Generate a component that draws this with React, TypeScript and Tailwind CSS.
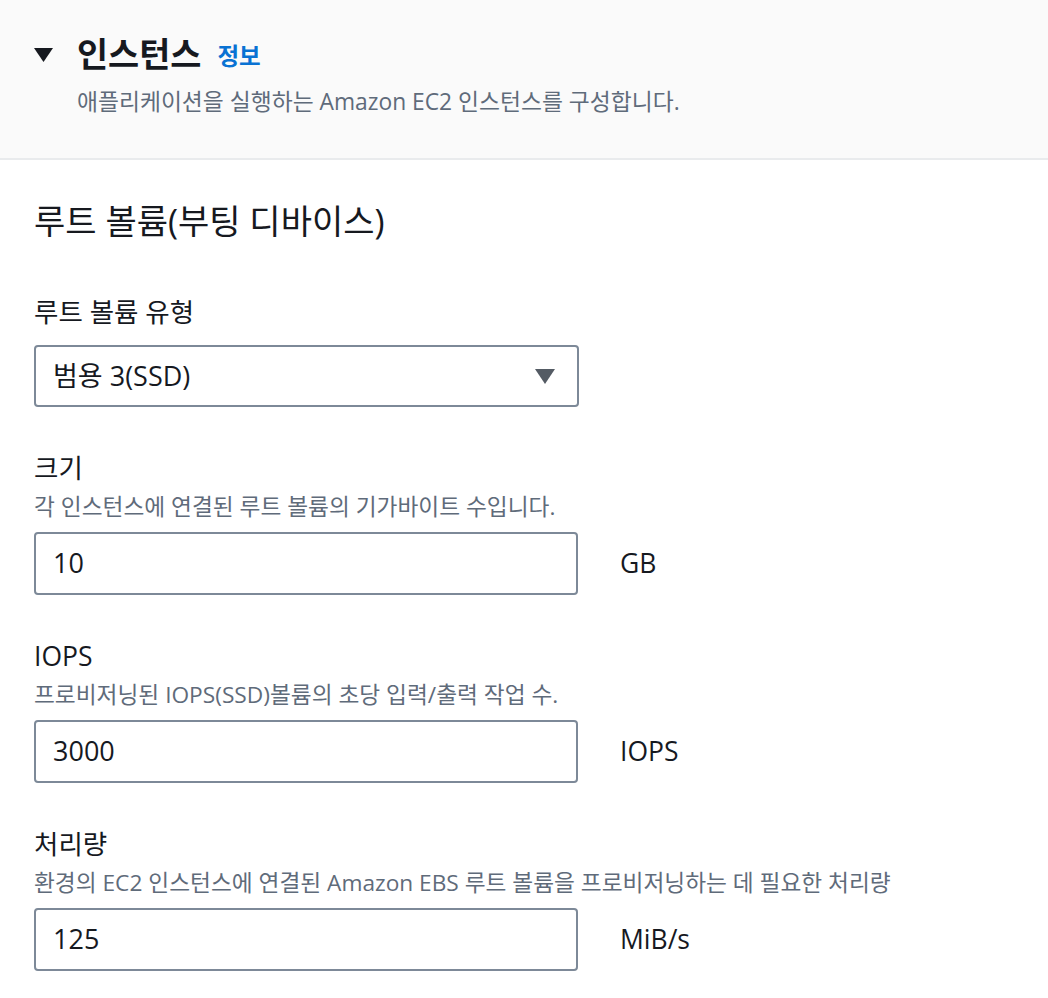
import React from "react";

const font = { fontFamily: '"Open Sans", "Noto Sans CJK KR", sans-serif' };

function Field({ label, desc, value, unit }: { label: string; desc: string; value: string; unit: string }) {
  return (
    <div className="flex flex-col mt-[45px]">
      <div className="text-[26.5px] leading-[32px] text-[#16191f]">{label}</div>
      <div className="mt-[9px] text-[22.7px] leading-[28px] text-[#5f6b7a]">{desc}</div>
      <div className="mt-[11px] flex items-center">
        <div className="w-[544px] h-[63px] box-border border-2 border-[#7d8998] rounded-[4px] flex items-center pl-[17px] text-[27px] text-[#16191f] bg-white">
          {value}
        </div>
        <div className="ml-[42px] text-[26.5px] text-[#16191f]">{unit}</div>
      </div>
    </div>
  );
}

export default function App() {
  return (
    <div className="w-[1048px] h-[998px] bg-white overflow-hidden" style={font}>
      <div className="h-[160px] box-border bg-[#fafafa] border-b-2 border-[#e9ebed] pt-[34px] pl-[34px]">
        <div className="flex items-center h-[40px]">
          <svg width="19" height="14" viewBox="0 0 19 14" className="mt-[1px]">
            <polygon points="0,0 19,0 9.5,14" fill="#16191f" />
          </svg>
          <span className="ml-[24px] text-[33.8px] leading-[40px] font-bold text-[#16191f]">인스턴스</span>
          <span className="ml-[16px] text-[23.5px] leading-[40px] font-bold text-[#0972d3] mt-[4px]">정보</span>
        </div>
        <div className="mt-[14px] ml-[43px] text-[22.8px] leading-[28px] text-[#5f6b7a]">
          애플리케이션을 실행하는 Amazon EC2 인스턴스를 구성합니다.
        </div>
      </div>
      <div className="pl-[34px] flex flex-col">
        <div className="mt-[41px] text-[34px] leading-[40px] text-[#16191f]">루트 볼륨(부팅 디바이스)</div>
        <div className="mt-[55px] text-[26.5px] leading-[32px] text-[#16191f]">루트 볼륨 유형</div>
        <div className="mt-[17px] w-[545px] h-[62px] box-border border-2 border-[#7d8998] rounded-[4px] flex items-center justify-between pl-[17px] pr-[22px] text-[27px] text-[#16191f]">
          <span>범용 3(SSD)</span>
          <svg width="20" height="15" viewBox="0 0 20 15">
            <polygon points="0,0 20,0 10,15" fill="#545b64" />
          </svg>
        </div>
        <Field label="크기" desc="각 인스턴스에 연결된 루트 볼륨의 기가바이트 수입니다." value="10" unit="GB" />
        <Field label="IOPS" desc="프로비저닝된 IOPS(SSD)볼륨의 초당 입력/출력 작업 수." value="3000" unit="IOPS" />
        <Field
          label="처리량"
          desc="환경의 EC2 인스턴스에 연결된 Amazon EBS 루트 볼륨을 프로비저닝하는 데 필요한 처리량"
          value="125"
          unit="MiB/s"
        />
      </div>
    </div>
  );
}
